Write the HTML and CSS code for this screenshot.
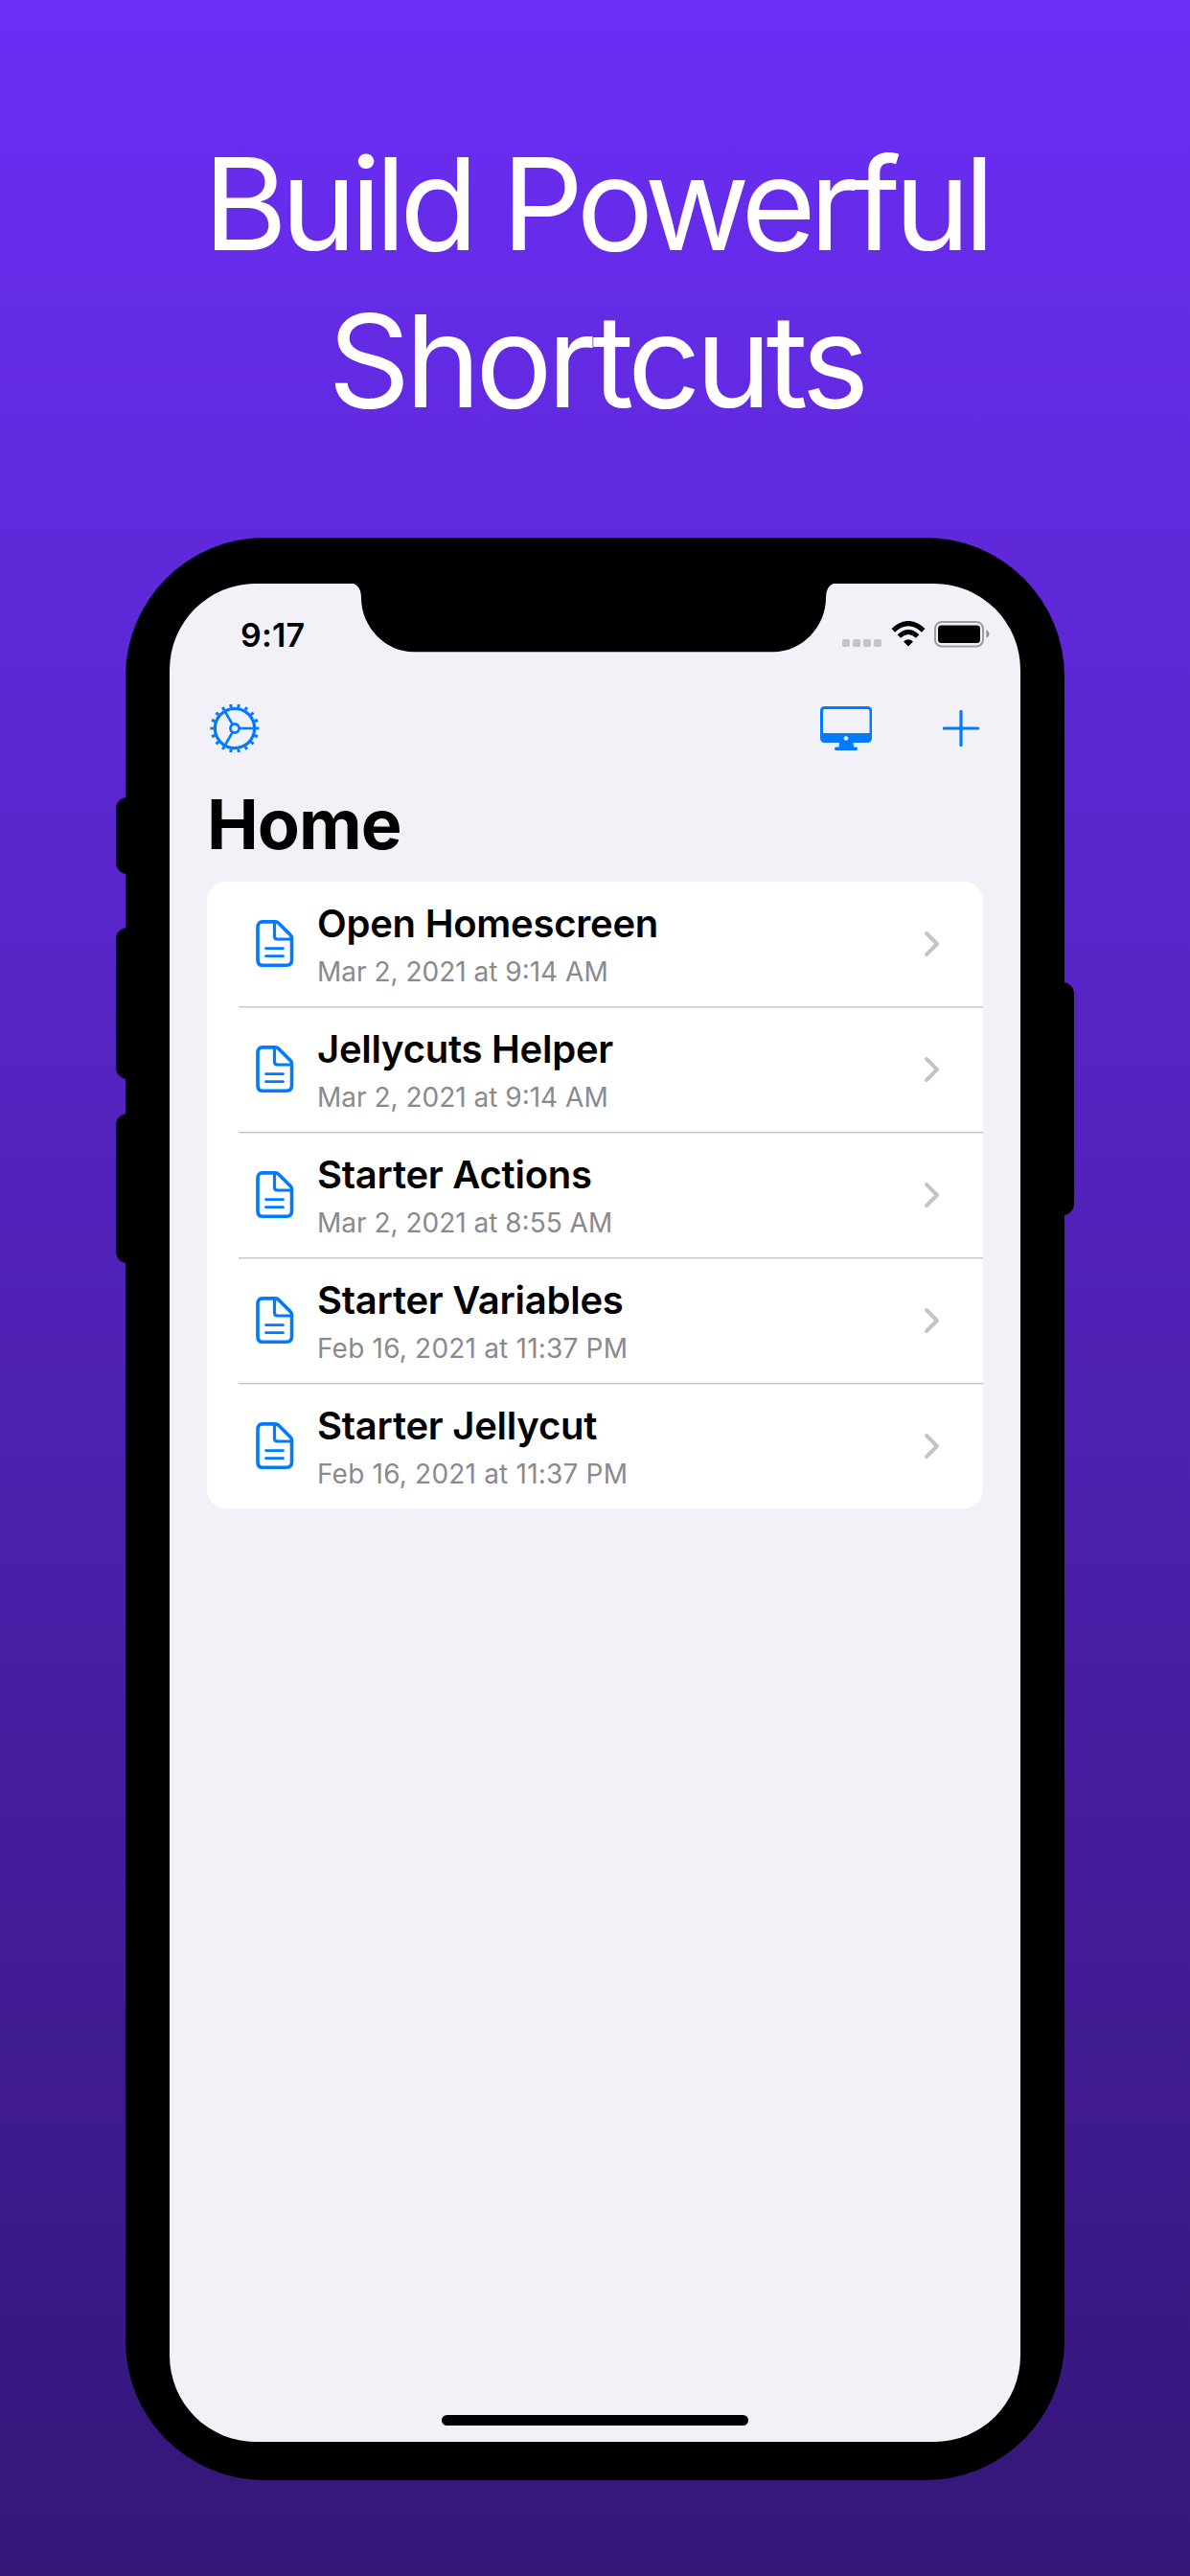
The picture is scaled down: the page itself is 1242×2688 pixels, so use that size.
FILE: index.html
```html
<!DOCTYPE html>
<html lang="en">
<head>
<meta charset="utf-8">
<title>Jellycuts</title>
<link rel="stylesheet" href="styles.css">
</head>
<body>
<svg class="defs" width="0" height="0" aria-hidden="true">
  <defs>
    <symbol id="doc" viewBox="0 0 40 50">
      <path d="M7 1.9h13.2q2.3 0 3.8 1.6l12 12q1.5 1.500 1.500 3.800v22.500q0 5.500-5.500 5.500h-25q-5 0-5-5.500v-34q0-5.900 5-5.900z" fill="none" stroke="currentColor" stroke-width="3.600"/>
      <path d="M19.500 2v15q0 3 3 3h15" fill="none" stroke="currentColor" stroke-width="3.200"/>
      <path d="M10.500 29.600h18M10.500 37.700h18" stroke="currentColor" stroke-width="2.800" stroke-linecap="round"/>
    </symbol>
    <symbol id="chevron" viewBox="0 0 18 28">
      <path d="M3 3l11 11L3 25" fill="none" stroke="currentColor" stroke-width="4" stroke-linecap="round" stroke-linejoin="round"/>
    </symbol>
  </defs>
</svg>
<main class="poster">
  <h1 class="headline"><span class="line-one">Build Powerful</span><br><span class="line-two">Shortcuts</span></h1>
  <div class="phone">
    <i class="button mute"></i><i class="button volume-up"></i><i class="button volume-down"></i><i class="button power"></i>
    <div class="screen">
      <svg class="notch" width="514" height="73" viewBox="0 0 514 73"><path d="M0 0Q14 0 14 16C14 46 39 72.300 69 72.300H444C474 72.300 499 46 499 16Q499 0 513 0z"/></svg>
      <div class="status">
        <span class="time">9:17</span>
        <div class="indicators">
          <div class="signal"><i></i><i></i><i></i><i></i></div>
          <svg class="wifi" width="36" height="27" viewBox="0 0 36 27">
            <path d="M2.300 9.800Q18-4.700 33.700 9.800" fill="none" stroke="#000" stroke-width="5"/>
            <path d="M8.300 16Q18 7 27.700 16" fill="none" stroke="#000" stroke-width="5"/>
            <path d="M18 26.500l-5-5q5-4.500 10 0z"/>
          </svg>
          <svg class="battery" width="58" height="28" viewBox="0 0 58 28">
            <rect x="1" y="1" width="50" height="25.500" rx="7" fill="none" stroke="#9c9ba0" stroke-width="2"/>
            <rect x="4" y="4.500" width="44" height="18.500" rx="3.500"/>
            <path d="M54.500 9q6 4.500 0 9z" fill="#8f8e94"/>
          </svg>
        </div>
      </div>
      <nav class="toolbar">
        <svg class="gear" width="52" height="52" viewBox="-26 -26 52 52">
          <g fill="none" stroke="currentColor">
            <circle r="20.600" stroke-width="3.200"/>
            <circle r="23.700" stroke-width="3.600" pathLength="180" stroke-dasharray="3.600 6.400" stroke-dashoffset="1.800"/>
            <circle r="4.600" stroke-width="2.700"/>
            <path d="M5.500 0H20.500M-2.800-4.800L-10.300-17.800M-2.800 4.800L-10.300 17.800" stroke-width="2.700"/>
          </g>
        </svg>
        <div class="actions">
          <svg width="54" height="47" viewBox="0 0 54 47">
            <path fill="currentColor" fill-rule="evenodd" d="M5 0H49Q54 0 54 5V33Q54 38 49 38H34.500L35 42.500H37.500Q39 42.500 39 44.300T37.500 46H16.500Q15 46 15 44.300T16.500 42.500H19.500L20 38H5Q0 38 0 33V5Q0 0 5 0zM5 3Q3 3 3 5V28H51.500V5Q51.500 3 49.500 3zM27 31.200a2.300 2.300 0 1 0 .01 0z"/>
          </svg>
          <svg width="38" height="38" viewBox="0 0 38 38"><path d="M19 1.500V36.500M1.500 19H36.500" stroke="currentColor" stroke-width="3.200" stroke-linecap="round"/></svg>
        </div>
      </nav>
      <h2 class="title">Home</h2>
      <ul class="list">
        <li class="row"><svg class="doc"><use href="#doc"/></svg><div class="text"><b>Open Homescreen</b><small>Mar 2, 2021 at 9:14 AM</small></div><svg class="chevron"><use href="#chevron"/></svg></li>
        <li class="row"><svg class="doc"><use href="#doc"/></svg><div class="text"><b>Jellycuts Helper</b><small>Mar 2, 2021 at 9:14 AM</small></div><svg class="chevron"><use href="#chevron"/></svg></li>
        <li class="row"><svg class="doc"><use href="#doc"/></svg><div class="text"><b>Starter Actions</b><small>Mar 2, 2021 at 8:55 AM</small></div><svg class="chevron"><use href="#chevron"/></svg></li>
        <li class="row"><svg class="doc"><use href="#doc"/></svg><div class="text"><b>Starter Variables</b><small class="long-date">Feb 16, 2021 at 11:37 PM</small></div><svg class="chevron"><use href="#chevron"/></svg></li>
        <li class="row"><svg class="doc"><use href="#doc"/></svg><div class="text"><b>Starter Jellycut</b><small class="long-date">Feb 16, 2021 at 11:37 PM</small></div><svg class="chevron"><use href="#chevron"/></svg></li>
      </ul>
      <div class="home-bar"></div>
    </div>
  </div>
</main>
</body>
</html>
```
FILE: styles.css
```css
* { box-sizing: border-box; }
body { margin: 0; font-family: Inter, "Liberation Sans", sans-serif; }
.defs { position: absolute; }
svg { display: block; flex: none; }
.poster {
  display: flex;
  flex-direction: column;
  align-items: center;
  height: 2688px;
  padding-top: 130px;
  background: linear-gradient(#6b2ef5, #341677);
}
.headline {
  height: 431px;
  margin: 0;
  padding-left: 2px;
  color: #fff;
  font-size: 134px;
  font-weight: 400;
  line-height: 164px;
  text-align: center;
  white-space: nowrap;
}
.line-one { letter-spacing: -6.7px; }
.line-two { letter-spacing: -5.6px; }
.phone {
  position: relative;
  width: 980px;
  height: 2027px;
  padding: 48px 46px 40px;
  border-radius: 145px;
  background: #000;
}
.button { position: absolute; left: -10px; width: 30px; border-radius: 12px; background: #000; }
.mute { top: 271px; height: 80px; }
.volume-up { top: 407px; height: 158px; }
.volume-down { top: 601px; height: 156px; }
.power { top: 464px; right: -10px; left: auto; height: 243px; }
.screen {
  position: relative;
  display: flex;
  flex-direction: column;
  height: 1939px;
  padding: 0 39px 17px;
  border-radius: 90px;
  background: #f2f1f7;
}
.notch { position: absolute; top: -1px; left: 186px; }
.status { display: flex; justify-content: space-between; height: 125px; padding: 33px 0 0 35px; }
.time { font-size: 34px; font-weight: 600; line-height: 41px; letter-spacing: 0.2px; }
.indicators { display: flex; align-items: flex-start; padding-top: 6px; margin-right: -7px; }
.signal { display: flex; gap: 3px; padding-top: 18.5px; margin-right: 10px; }
.signal i { width: 8px; height: 8px; border-radius: 2px; background: #c4c3c8; }
.wifi { margin-right: 9px; }
.toolbar { display: flex; align-items: center; justify-content: space-between; height: 52px; color: #007aff; padding: 0 4px 0 3px; }
.actions { display: flex; align-items: center; gap: 74px; }
.title { margin: 34px 0 0; font-size: 72px; font-weight: 700; line-height: 80px; letter-spacing: -1px; }
.list { margin: 20px 0 0; padding: 0; list-style: none; border-radius: 20px; background: #fff; }
.row { position: relative; display: flex; align-items: center; height: 130.9px; padding: 0 44px 0 51px; }
.row + .row::before {
  content: "";
  position: absolute;
  top: -1px;
  right: 0;
  left: 33px;
  height: 2px;
  background: linear-gradient(#c6c6c8 50%, #e6e6e8 50%);
}
.doc { width: 40px; height: 50px; margin-right: 24px; color: #007aff; }
.text { flex: 1; padding-top: 8px; white-space: nowrap; }
.text b { display: block; font-size: 40px; font-weight: 600; line-height: 50px; letter-spacing: -0.25px; }
.text small { display: block; color: #8a8a8e; font-size: 28px; line-height: 50px; }
.text .long-date { letter-spacing: 0.2px; }
.chevron { width: 18px; height: 28px; color: #c4c4c6; }
.home-bar { width: 320px; height: 11px; margin: auto auto 0; border-radius: 6px; background: #000; }
```
